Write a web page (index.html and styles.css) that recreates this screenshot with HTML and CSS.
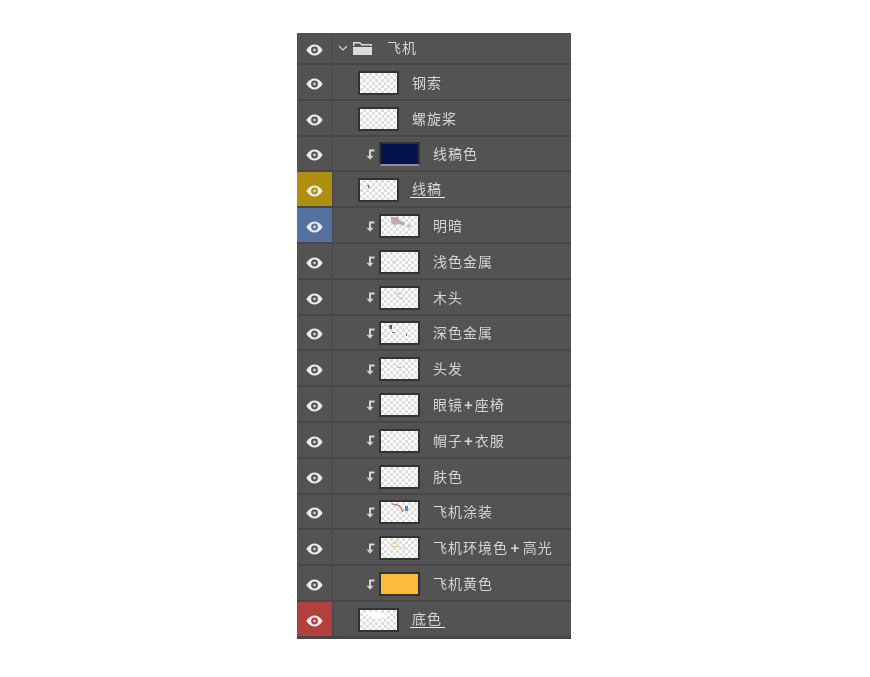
FILE: index.html
```html
<!DOCTYPE html>
<html lang="en">
<head>
    <meta charset="UTF-8">
    <title>图层</title>
    <link rel="stylesheet" href="styles.css">
</head>
<body>
    <svg class="defs" width="0" height="0">
        <symbol id="eye" viewBox="0 0 18 12">
            <path d="M0.300 6C3 1.700 6 0.200 9 0.200s6 1.500 8.700 5.800C15 10.300 12 11.800 9 11.800S3 10.300 0.300 6Z" fill="currentColor"/>
            <circle cx="9" cy="6" r="3.600" fill="var(--eye-bg, #535353)"/>
            <circle cx="9" cy="6" r="1.500" fill="currentColor" opacity="0.800"/>
        </symbol>
        <symbol id="clip" viewBox="0 0 9 11">
            <path d="M8.500 1.500H4V8" fill="none" stroke="currentColor" stroke-width="2"/>
            <path d="M0.500 6.800h7L4 10.800Z" fill="currentColor"/>
        </symbol>
    </svg>

    <div class="panel">
        <div class="row row-first">
            <div class="eye-cell"><svg class="eye"><use href="#eye"/></svg></div>
            <div class="layer group">
                <svg class="chevron" viewBox="0 0 10 6"><path d="M1 1l4 4 4-4" fill="none" stroke="currentColor" stroke-width="1.200"/></svg>
                <svg class="folder" viewBox="0 0 19 14"><path d="M0.700 5V1.700h6L8.700 3.700h9.600V5" fill="none" stroke="#dcdcdc" stroke-width="1.400"/><path d="M0 6h19v8H0Z" fill="#dcdcdc"/></svg>
                <span class="name group-name">飞机</span>
            </div>
        </div>

        <div class="row">
            <div class="eye-cell"><svg class="eye"><use href="#eye"/></svg></div>
            <div class="layer"><div class="thumb"></div><span class="name">钢索</span></div>
        </div>
        <div class="row">
            <div class="eye-cell"><svg class="eye"><use href="#eye"/></svg></div>
            <div class="layer"><div class="thumb"></div><span class="name">螺旋桨</span></div>
        </div>
        <div class="row">
            <div class="eye-cell"><svg class="eye"><use href="#eye"/></svg></div>
            <div class="layer clipped"><svg class="clip"><use href="#clip"/></svg><div class="thumb navy"></div><span class="name">线稿色</span></div>
        </div>
        <div class="row">
            <div class="eye-cell gold"><svg class="eye"><use href="#eye"/></svg></div>
            <div class="layer">
                <div class="thumb"><svg viewBox="0 0 37 20"><path d="M8 5l1 3" stroke="#6d6a70" stroke-width="1.500"/></svg></div>
                <span class="name underlined">线稿</span>
            </div>
        </div>
        <div class="row">
            <div class="eye-cell blue"><svg class="eye"><use href="#eye"/></svg></div>
            <div class="layer clipped">
                <svg class="clip"><use href="#clip"/></svg>
                <div class="thumb"><svg viewBox="0 0 37 20"><path d="M10 1h7l2 4 5 1-1 4-5-2-5 1-3-3Z" fill="#c3a9ad"/><path d="M26 8l4 1-1 3-3-1Z" fill="#c4c0c0"/></svg></div>
                <span class="name">明暗</span>
            </div>
        </div>
        <div class="row">
            <div class="eye-cell"><svg class="eye"><use href="#eye"/></svg></div>
            <div class="layer clipped">
                <svg class="clip"><use href="#clip"/></svg>
                <div class="thumb"><svg viewBox="0 0 37 20"><path d="M11 11l5-3" stroke="#c9c9c9" stroke-width="1"/></svg></div>
                <span class="name">浅色金属</span>
            </div>
        </div>
        <div class="row">
            <div class="eye-cell"><svg class="eye"><use href="#eye"/></svg></div>
            <div class="layer clipped">
                <svg class="clip"><use href="#clip"/></svg>
                <div class="thumb"><svg viewBox="0 0 37 20"><path d="M14 4l4 2 3-1M18 9l5 2" stroke="#d5bcc0" stroke-width="1.200" fill="none"/></svg></div>
                <span class="name">木头</span>
            </div>
        </div>
        <div class="row">
            <div class="eye-cell"><svg class="eye"><use href="#eye"/></svg></div>
            <div class="layer clipped">
                <svg class="clip"><use href="#clip"/></svg>
                <div class="thumb"><svg viewBox="0 0 37 20"><path d="M8 2h3v4H9Z" fill="#5f5a66"/><path d="M11 9h3v1h-3ZM25 11h1v2h-1Z" fill="#77747c"/></svg></div>
                <span class="name">深色金属</span>
            </div>
        </div>
        <div class="row">
            <div class="eye-cell"><svg class="eye"><use href="#eye"/></svg></div>
            <div class="layer clipped">
                <svg class="clip"><use href="#clip"/></svg>
                <div class="thumb"><svg viewBox="0 0 37 20"><path d="M17 8h3l1 1h-3Z" fill="#e39aa4"/></svg></div>
                <span class="name">头发</span>
            </div>
        </div>
        <div class="row">
            <div class="eye-cell"><svg class="eye"><use href="#eye"/></svg></div>
            <div class="layer clipped"><svg class="clip"><use href="#clip"/></svg><div class="thumb"></div><span class="name">眼镜<span class="plus">+</span>座椅</span></div>
        </div>
        <div class="row">
            <div class="eye-cell"><svg class="eye"><use href="#eye"/></svg></div>
            <div class="layer clipped"><svg class="clip"><use href="#clip"/></svg><div class="thumb"></div><span class="name">帽子<span class="plus">+</span>衣服</span></div>
        </div>
        <div class="row">
            <div class="eye-cell"><svg class="eye"><use href="#eye"/></svg></div>
            <div class="layer clipped"><svg class="clip"><use href="#clip"/></svg><div class="thumb"></div><span class="name">肤色</span></div>
        </div>
        <div class="row">
            <div class="eye-cell"><svg class="eye"><use href="#eye"/></svg></div>
            <div class="layer clipped">
                <svg class="clip"><use href="#clip"/></svg>
                <div class="thumb"><svg viewBox="0 0 37 20"><path d="M11 2c4 0 9 2 11 8" stroke="#d9534f" stroke-width="1.200" fill="none"/><path d="M24 4h3v5h-3Z" fill="#3f8fe0"/></svg></div>
                <span class="name">飞机涂装</span>
            </div>
        </div>
        <div class="row">
            <div class="eye-cell"><svg class="eye"><use href="#eye"/></svg></div>
            <div class="layer clipped">
                <svg class="clip"><use href="#clip"/></svg>
                <div class="thumb"><svg viewBox="0 0 37 20"><path d="M10 6l7-2M11 9l6-1 3 2M22 10h3" stroke="#f0cf86" stroke-width="1.500" fill="none"/></svg></div>
                <span class="name wide">飞机环境色<span class="plus">+</span>高光</span>
            </div>
        </div>
        <div class="row">
            <div class="eye-cell"><svg class="eye"><use href="#eye"/></svg></div>
            <div class="layer clipped"><svg class="clip"><use href="#clip"/></svg><div class="thumb yellow"></div><span class="name">飞机黄色</span></div>
        </div>
        <div class="row">
            <div class="eye-cell red"><svg class="eye"><use href="#eye"/></svg></div>
            <div class="layer">
                <div class="thumb"><svg viewBox="0 0 37 20"><path d="M6 3l6-2 10 2 6 1-5 4-9 1-5-3Z" fill="#fff"/></svg></div>
                <span class="name underlined">底色</span>
            </div>
        </div>
    </div>
</body>
</html>
```

FILE: styles.css
```css
* {
    margin: 0;
    padding: 0;
    box-sizing: border-box;
}

body {
    background: #fff;
    font-family: "Noto Sans CJK SC", "Liberation Sans", sans-serif;
    padding: 33px 0 0 297px;
}

.defs {
    position: absolute;
}

.panel {
    width: 274px;
    height: 606px;
    background: #535353;
    color: #d4d4d4;
    border-bottom: 1px solid #474747;
    filter: blur(0.35px);
}

.row {
    display: flex;
    height: 35.8px;
    border-bottom: 2px solid #474747;
}

.row-first {
    height: 32px;
}

.eye-cell {
    width: 36px;
    flex-shrink: 0;
    display: flex;
    align-items: center;
    justify-content: center;
    padding-top: 4px;
    border-right: 1px solid #474747;
    color: #ececec;
}

.gold {
    background: #ae8f0f;
    --eye-bg: #ae8f0f;
}

.blue {
    background: #54719f;
    --eye-bg: #54719f;
}

.red {
    background: #b43f3f;
    --eye-bg: #b43f3f;
}

.eye {
    width: 17px;
    height: 12px;
}

.layer {
    flex: 1;
    display: flex;
    align-items: center;
    padding-left: 25px;
}

.clipped {
    padding-left: 33px;
}

.group {
    padding-left: 5px;
}

.clip {
    width: 9px;
    height: 11px;
    margin: 2px 4px 0 0;
    flex-shrink: 0;
}

.chevron {
    width: 10px;
    height: 6px;
    margin-right: 5px;
}

.folder {
    width: 19px;
    height: 14px;
}

.thumb {
    width: 41px;
    height: 24px;
    margin-top: 2px;
    flex-shrink: 0;
    border: 2px solid #333;
    background-color: #fff;
    background-image: conic-gradient(#dedede 25%, #fff 0 50%, #dedede 0 75%, #fff 0);
    background-size: 6px 6px;
}

.thumb svg {
    display: block;
    width: 100%;
    height: 100%;
}

.navy {
    background: #04134d;
    border-bottom-color: #8d8fa0;
}

.yellow {
    background: #fdbb3e;
}

.name {
    margin-left: 13px;
    font-size: 14px;
    letter-spacing: 1px;
    white-space: nowrap;
}

.plus {
    margin: 0 1px;
    font-family: "Liberation Sans", sans-serif;
    font-size: 15px;
    font-weight: bold;
}

.wide .plus {
    margin: 0 2.5px;
}

.group-name {
    margin: -2px 0 0 15px;
}

.underlined {
    margin-left: 11px;
    padding: 0 3px 0 2px;
    line-height: 17px;
    border-bottom: 1px solid #e8e8e8;
}
```
